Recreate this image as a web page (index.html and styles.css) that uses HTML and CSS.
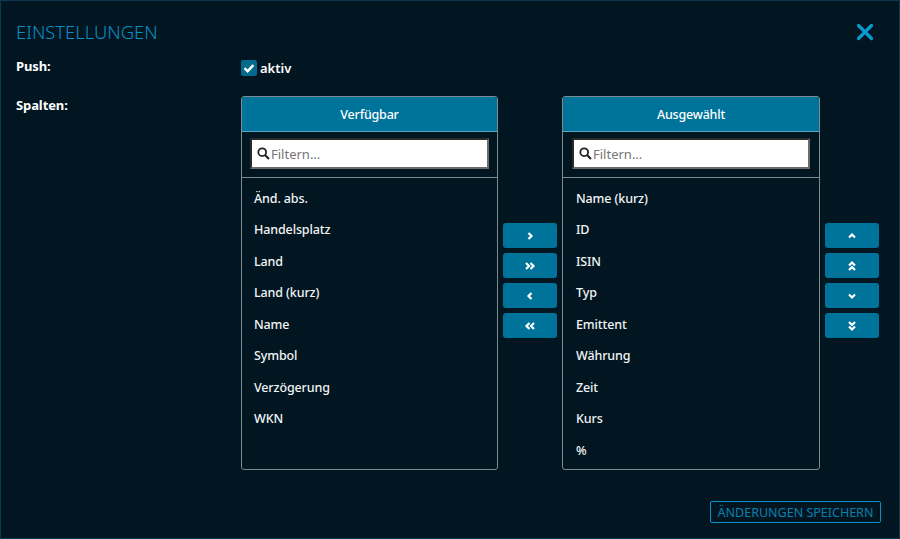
FILE: index.html
```html
<!DOCTYPE html>
<html lang="de">
<head>
<meta charset="utf-8">
<title>Einstellungen</title>
<link rel="stylesheet" href="styles.css">
</head>
<body>
<div class="dialog">
  <header class="head">
    <h1 class="title">EINSTELLUNGEN</h1>
    <svg class="close" width="18" height="18" viewBox="0 0 18 18"><path d="M2.5 2.5L15.5 15.5M15.5 2.5L2.5 15.5" stroke="#0b9ad0" stroke-width="3.2" stroke-linecap="round"/></svg>
  </header>
  <div class="row push">
    <div class="label">Push:</div>
    <label class="check">
      <span class="box"><svg width="16" height="16" viewBox="0 0 16 16"><path d="M3.5 8.2L6.6 11.2L12.4 5.2" fill="none" stroke="#fff" stroke-width="2.4"/></svg></span>
      <span>aktiv</span>
    </label>
  </div>
  <div class="row cols">
    <div class="label">Spalten:</div>
    <div class="lists">
      <section class="panel">
        <div class="panel-head">Verfügbar</div>
        <div class="filter">
          <div class="search">
            <svg width="13" height="13" viewBox="0 0 13 13"><circle cx="5.2" cy="5.2" r="3.9" fill="none" stroke="#222" stroke-width="1.8"/><path d="M8 8L12 12" stroke="#222" stroke-width="2.2"/></svg>
            <span>Filtern...</span>
          </div>
        </div>
        <ul class="items">
          <li>Änd. abs.</li><li>Handelsplatz</li><li>Land</li><li>Land (kurz)</li><li>Name</li><li>Symbol</li><li>Verzögerung</li><li>WKN</li>
        </ul>
      </section>
      <div class="btns">
        <button class="btn"><svg width="12" height="12" viewBox="0 0 12 12"><path d="M4.5 3L7.5 6L4.5 9" class="ch"/></svg></button>
        <button class="btn"><svg width="12" height="12" viewBox="0 0 12 12"><path d="M2 3L5 6L2 9M6.5 3L9.5 6L6.5 9" class="ch"/></svg></button>
        <button class="btn"><svg width="12" height="12" viewBox="0 0 12 12"><path d="M7.5 3L4.5 6L7.5 9" class="ch"/></svg></button>
        <button class="btn"><svg width="12" height="12" viewBox="0 0 12 12"><path d="M5.5 3L2.5 6L5.5 9M10 3L7 6L10 9" class="ch"/></svg></button>
      </div>
      <section class="panel panel-wide">
        <div class="panel-head">Ausgewählt</div>
        <div class="filter">
          <div class="search">
            <svg width="13" height="13" viewBox="0 0 13 13"><circle cx="5.2" cy="5.2" r="3.9" fill="none" stroke="#222" stroke-width="1.8"/><path d="M8 8L12 12" stroke="#222" stroke-width="2.2"/></svg>
            <span>Filtern...</span>
          </div>
        </div>
        <ul class="items">
          <li>Name (kurz)</li><li>ID</li><li>ISIN</li><li>Typ</li><li>Emittent</li><li>Währung</li><li>Zeit</li><li>Kurs</li><li>%</li>
        </ul>
      </section>
      <div class="btns">
        <button class="btn"><svg width="12" height="12" viewBox="0 0 12 12"><path d="M3 7.5L6 4.5L9 7.5" class="ch"/></svg></button>
        <button class="btn"><svg width="12" height="12" viewBox="0 0 12 12"><path d="M3 5.5L6 2.5L9 5.5M3 10L6 7L9 10" class="ch"/></svg></button>
        <button class="btn"><svg width="12" height="12" viewBox="0 0 12 12"><path d="M3 4.5L6 7.5L9 4.5" class="ch"/></svg></button>
        <button class="btn"><svg width="12" height="12" viewBox="0 0 12 12"><path d="M3 2L6 5L9 2M3 6.5L6 9.5L9 6.5" class="ch"/></svg></button>
      </div>
    </div>
  </div>
  <footer class="foot"><button class="save">ÄNDERUNGEN SPEICHERN</button></footer>
</div>
</body>
</html>
```

FILE: styles.css
```css
* { box-sizing: border-box; }
html, body { margin: 0; padding: 0; }
body {
  width: 900px;
  height: 539px;
  overflow: hidden;
  background: #011621;
  font-family: "Noto Sans", "Open Sans", sans-serif;
  color: #fff;
}
.dialog {
  width: 900px;
  height: 539px;
  border: 1px solid #0b3a4e;
  padding: 0 20px 0 15px;
  display: flex;
  flex-direction: column;
}
.head {
  height: 58px;
  display: flex;
  align-items: center;
  justify-content: space-between;
  padding-top: 3px;
}
.title {
  margin: 0;
  font-size: 18.4px;
  font-weight: 300;
  color: #0b8fc4;
}
.close { margin-right: 5px; }
.row { display: grid; grid-template-columns: 225px 1fr; }
.label { font-size: 13px; font-weight: 700; color: #fff; letter-spacing: -0.1px; }
.push { height: 37px; }
.push .label { margin-top: -2px; }
.check {
  display: flex;
  align-items: center;
  gap: 3px;
  height: 18px;
  font-size: 13px;
  font-weight: 600;
}
.box {
  width: 16px;
  height: 16px;
  border-radius: 2px;
  background: #016a8d;
  display: block;
}
.box svg { display: block; }
.lists { display: flex; align-items: stretch; height: 374px; }
.panel {
  width: 257px;
  height: 374px;
  border: 1px solid #7c8a91;
  border-radius: 3px;
  overflow: hidden;
}
.panel-wide { width: 258px; }
.panel-head {
  height: 35px;
  background: #00739b;
  border-bottom: 1px solid #5aa6c0;
  display: flex;
  align-items: center;
  justify-content: center;
  font-size: 12.5px;
  font-weight: 500;
  letter-spacing: -0.2px;
}
.filter {
  height: 46px;
  padding: 6px 0 0 8px;
  border-bottom: 1px solid #7c8a91;
}
.panel-wide .filter { padding-left: 9px; }
.search {
  width: 239px;
  height: 31px;
  background: #fff;
  border: 2px solid;
  border-color: #2a2a2a #6b6b6b #6b6b6b #2a2a2a;
  display: flex;
  align-items: center;
  gap: 1px;
  padding-left: 5px;
  font-size: 13px;
  color: #757575;
}
.panel-wide .search { width: 238px; }
.items {
  list-style: none;
  margin: 0;
  padding: 4.6px 0 0 12px;
  font-size: 12.5px;
  font-weight: 500;
  letter-spacing: -0.12px;
  color: #f2f4f5;
}
.panel-wide .items { padding-left: 13px; }
.items li { height: 31.5px; line-height: 31.5px; }
.btns {
  width: 64px;
  padding: 127px 0 0 5px;
  display: flex;
  flex-direction: column;
  gap: 5px;
}
.btn {
  width: 54px;
  height: 25px;
  padding: 0;
  border: 0;
  border-radius: 3px;
  background: #00739b;
  display: flex;
  align-items: center;
  justify-content: center;
}
.btn svg { display: block; }
.ch { fill: none; stroke: #fff; stroke-width: 2.2; }
.foot { display: flex; justify-content: flex-end; padding-top: 31px; }
.save {
  width: 171px;
  height: 22px;
  margin-right: -2px;
  padding: 0;
  background: transparent;
  border: 1px solid #0b8fc4;
  border-radius: 2px;
  color: #0a80b0;
  font-family: inherit;
  font-size: 12.5px;
  font-weight: 400;
}
```
